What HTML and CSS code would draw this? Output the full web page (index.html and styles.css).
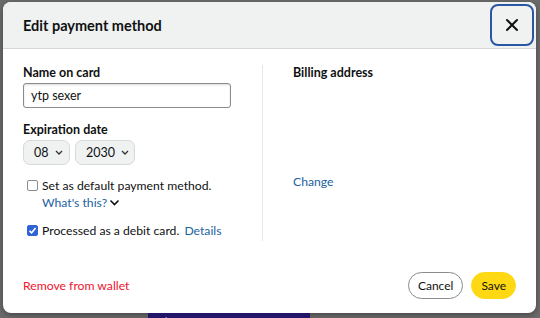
FILE: index.html
```html
<!DOCTYPE html>
<html lang="en">
<head>
    <meta charset="UTF-8">
    <title>Edit payment method</title>
    <link rel="stylesheet" href="styles.css">
</head>
<body>
    <div class="modal">
        <div class="modal-header">
            <h2>Edit payment method</h2>
            <button class="close-btn" aria-label="Close">
                <svg width="14" height="14" viewBox="0 0 14 14"><path d="M2 2L12 12M12 2L2 12" stroke="#111" stroke-width="2" stroke-linecap="round"/></svg>
            </button>
        </div>

        <div class="modal-body">
            <div class="col-left">
                <label class="field-label">Name on card</label>
                <input type="text" class="text-input" value="ytp sexer">

                <label class="field-label exp-label">Expiration date</label>
                <div class="selects">
                    <span class="select month">08 <svg class="caret" width="8" height="5" viewBox="0 0 8 5"><path d="M1 1L4 4L7 1" fill="none" stroke="#333" stroke-width="1.3"/></svg></span>
                    <span class="select year">2030 <svg class="caret" width="8" height="5" viewBox="0 0 8 5"><path d="M1 1L4 4L7 1" fill="none" stroke="#333" stroke-width="1.3"/></svg></span>
                </div>

                <div class="check-row first">
                    <span class="checkbox"></span>
                    <div>
                        <div>Set as default payment method.</div>
                        <a class="link">What's this?<svg width="11" height="8" viewBox="0 0 11 8"><path d="M1.5 1.5L5.5 5.5L9.5 1.5" fill="none" stroke="#111" stroke-width="1.6"/></svg></a>
                    </div>
                </div>

                <div class="check-row">
                    <span class="checkbox checked">
                        <svg width="9" height="9" viewBox="0 0 9 9"><path d="M1.5 4.8L3.6 6.8L7.6 2" fill="none" stroke="#fff" stroke-width="1.6"/></svg>
                    </span>
                    <div>Processed as a debit card. <a class="link details">Details</a></div>
                </div>
            </div>

            <div class="col-right">
                <div class="field-label">Billing address</div>
                <a class="link change">Change</a>
            </div>
        </div>

        <div class="modal-footer">
            <a class="remove">Remove from wallet</a>
            <div class="actions">
                <button class="btn cancel">Cancel</button>
                <button class="btn save">Save</button>
            </div>
        </div>
    </div>

    <div class="behind">ytp sexer</div>
</body>
</html>
```

FILE: styles.css
```css
* {
    margin: 0;
    padding: 0;
    box-sizing: border-box;
    font-family: Lato, 'Noto Sans', sans-serif;
}

body {
    background: #6b6b6b;
    color: #0f1111;
    font-size: 12.2px;
    line-height: 17px;
    padding: 2px 4px 0 3px;
    overflow: hidden;
    height: 318px;
}

.modal {
    background: #fff;
    border-radius: 8px;
    height: 311px;
    box-shadow: 0 2px 6px rgba(0, 0, 0, 0.35);
    overflow: hidden;
}

.modal-header {
    display: flex;
    justify-content: space-between;
    align-items: center;
    height: 47px;
    background: #f0f2f2;
    border-bottom: 1px solid #d5d9d9;
    padding: 0 2px 0 20px;
}

.modal-header h2 {
    font-size: 14.5px;
    font-weight: 700;
}

.close-btn {
    width: 44px;
    height: 42px;
    border: 2px solid #2a57a3;
    border-radius: 8px;
    background: transparent;
    display: flex;
    align-items: center;
    justify-content: center;
}

.modal-body {
    display: flex;
    padding: 16px 20px 0 20px;
    height: 192px;
}

.col-left {
    width: 240px;
    border-right: 1px solid #e7e7e7;
}

.col-right {
    padding-left: 30px;
    display: flex;
    flex-direction: column;
}

.field-label {
    display: block;
    font-weight: 700;
    font-size: 12.5px;
    line-height: 16px;
    margin-bottom: 2px;
}

.text-input {
    width: 208px;
    height: 25px;
    border: 1px solid #888c8c;
    border-radius: 3px;
    padding: 0 7px;
    font-size: 12.5px;
    color: #0f1111;
    box-shadow: inset 0 1px 2px rgba(15, 17, 17, 0.15);
}

.exp-label {
    margin-top: 14px;
}

.selects {
    display: flex;
    gap: 5px;
}

.select {
    display: flex;
    align-items: center;
    gap: 6px;
    height: 25px;
    padding: 0 0 0 10px;
    background: #f0f2f2;
    border: 1px solid #d5d9d9;
    border-radius: 7px;
    font-size: 12.5px;
}

.caret {
    flex: none;
}

.month {
    width: 47px;
}

.year {
    width: 60px;
}

.check-row {
    display: flex;
    gap: 4px;
    margin-left: 4px;
    margin-top: 11px;
}

.check-row.first {
    margin-top: 12px;
}

.checkbox {
    flex: none;
    width: 11px;
    height: 11px;
    margin-top: 3px;
    border: 1px solid #888c8c;
    border-radius: 2px;
    background: #fff;
    display: flex;
    align-items: center;
    justify-content: center;
}

.checkbox.checked {
    background: #2f63d6;
    border-color: #2f63d6;
}

.link {
    color: #2162a1;
    text-decoration: none;
}

.link svg {
    margin-left: 2px;
}

.details {
    margin-left: 2px;
}

.change {
    margin-top: 90px;
}

.modal-footer {
    display: flex;
    justify-content: space-between;
    align-items: center;
    padding: 17px 20px 0 20px;
    height: 72px;
}

.remove {
    color: #f0142d;
}

.actions {
    display: flex;
    gap: 8px;
}

.btn {
    height: 27px;
    border-radius: 14px;
    font-size: 12px;
    padding: 0 9px;
    color: #0f1111;
}

.cancel {
    background: #fff;
    border: 1px solid #888c8c;
}

.save {
    background: #ffd814;
    border: 1px solid #ffd814;
}

.behind {
    margin: 0 0 0 145px;
    width: 162px;
    height: 10px;
    background: #22166a;
    color: #c9c4e6;
    font-size: 12px;
    padding-left: 10px;
    line-height: 16px;
    overflow: hidden;
}
```
